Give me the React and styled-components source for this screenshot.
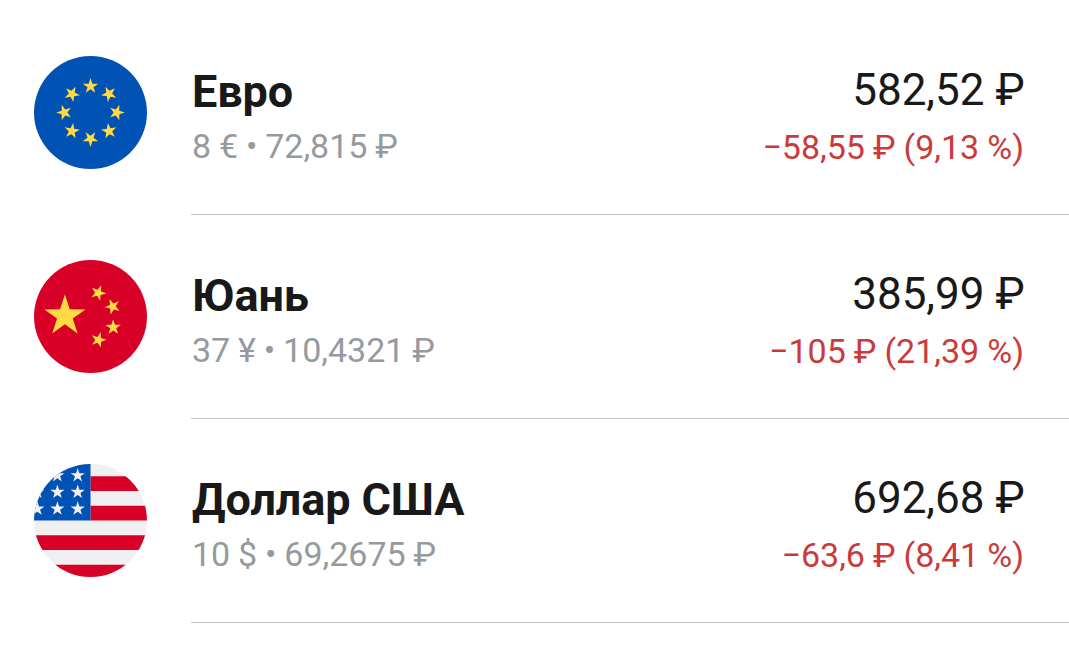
import styled, { createGlobalStyle } from "styled-components"

const GlobalStyle = createGlobalStyle`
  body {
    margin: 0;
    background: #fff;
    font-family: Roboto, "Noto Sans", sans-serif;
  }
`

const List = styled.ul`
  list-style: none;
  margin: 0;
  padding: 11px 0 0 34px;
  overflow: hidden;
`

const Row = styled.li`
  display: flex;
  align-items: flex-start;
  height: 204px;
`

const Flag = styled.svg`
  flex: none;
  width: 113px;
  height: 113px;
  margin-top: 45px;
`

const Content = styled.div`
  flex: 1;
  display: flex;
  justify-content: space-between;
  box-sizing: border-box;
  height: 204px;
  margin-left: 44px;
  padding: 53px 45px 0 1px;
  border-bottom: 1px solid #c6c7c9;
  white-space: nowrap;
`

const Column = styled.div`
  display: flex;
  flex-direction: column;
  align-items: ${({ $end }) => ($end ? "flex-end" : "flex-start")};
`

const Name = styled.span`
  font-size: 45px;
  font-weight: 700;
  line-height: 56px;
  letter-spacing: -0.1px;
  color: #19191a;
`

const Rate = styled.span`
  font-size: 34px;
  line-height: 52px;
  word-spacing: -0.6px;
  color: #969a9e;
`

const Total = styled.span`
  margin-right: -0.6px;
  font-size: 44px;
  line-height: 52px;
  color: #19191a;
`

const Change = styled.span`
  font-size: 34px;
  line-height: 63px;
  word-spacing: -0.4px;
  color: #cb3a3a;
`

const starPoints = (cx, cy, r, angle = 0) =>
  Array.from({ length: 10 }, (_, i) => {
    const radius = i % 2 ? r * 0.382 : r
    const a = ((angle - 90 + i * 36) * Math.PI) / 180
    return `${(cx + radius * Math.cos(a)).toFixed(2)},${(cy + radius * Math.sin(a)).toFixed(2)}`
  }).join(" ")

function Star({ x, y, r, angle }) {
  return <polygon points={starPoints(x, y, r, angle)} />
}

function EuroFlag() {
  return (
    <Flag viewBox="0 0 512 512">
      <circle cx="256" cy="256" r="256" fill="#0052b4" />
      <g fill="#ffda44">
        {[0, 45, 90, 135, 180, 225, 270, 315].map((angle) => (
          <g key={angle} transform={`rotate(${angle} 256 256)`}>
            <Star x={256} y={137} r={36.9} />
          </g>
        ))}
      </g>
    </Flag>
  )
}

function ChinaFlag() {
  return (
    <Flag viewBox="0 0 512 512">
      <circle cx="256" cy="256" r="256" fill="#d80027" />
      <g fill="#ffda44">
        <Star x={140} y={254} r={98} />
        <Star x={291} y={149} r={36.9} angle={22} />
        <Star x={356} y={211} r={36.9} angle={-22} />
        <Star x={359} y={305} r={36.9} angle={-1} />
        <Star x={292} y={362} r={36.9} angle={17} />
      </g>
    </Flag>
  )
}

function UsaFlag() {
  return (
    <Flag viewBox="0 0 512 512">
      <clipPath id="usa-circle">
        <circle cx="256" cy="256" r="256" />
      </clipPath>
      <g clipPath="url(#usa-circle)">
        <rect width="512" height="512" fill="#f0f0f0" />
        <g fill="#d80027">
          <rect x="256" y="55.6" width="256" height="66.8" />
          <rect x="256" y="189.2" width="256" height="66.8" />
          <rect y="322.8" width="512" height="66.8" />
          <rect y="456.4" width="512" height="66.8" />
        </g>
        <rect width="256" height="256" fill="#0052b4" />
        <g fill="#f0f0f0">
          {[52, 127, 203].map((y) =>
            [15, 106, 198].map((x) => (
              <Star key={`${x}-${y}`} x={x} y={y} r={34} />
            ))
          )}
        </g>
      </g>
    </Flag>
  )
}

const currencies = [
  {
    name: "Евро",
    flag: EuroFlag,
    rate: "8 € • 72,815 ₽",
    total: "582,52 ₽",
    change: "−58,55 ₽ (9,13 %)",
  },
  {
    name: "Юань",
    flag: ChinaFlag,
    rate: "37 ¥ • 10,4321 ₽",
    total: "385,99 ₽",
    change: "−105 ₽ (21,39 %)",
  },
  {
    name: "Доллар США",
    flag: UsaFlag,
    rate: "10 $ • 69,2675 ₽",
    total: "692,68 ₽",
    change: "−63,6 ₽ (8,41 %)",
  },
]

function App() {
  return (
    <>
      <GlobalStyle />
      <List>
        {currencies.map(({ name, flag: FlagIcon, rate, total, change }) => (
          <Row key={name}>
            <FlagIcon />
            <Content>
              <Column>
                <Name>{name}</Name>
                <Rate>{rate}</Rate>
              </Column>
              <Column $end>
                <Total>{total}</Total>
                <Change>{change}</Change>
              </Column>
            </Content>
          </Row>
        ))}
      </List>
    </>
  )
}

export default App
